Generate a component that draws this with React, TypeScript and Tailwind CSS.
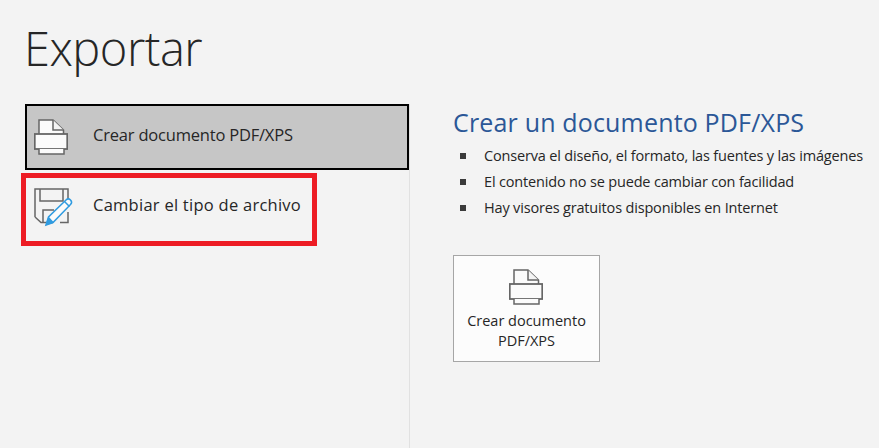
const font = { fontFamily: '"Open Sans", "Noto Sans", sans-serif' }

function PrinterIcon() {
  return (
    <svg viewBox="0 0 34 36" className="w-[34px] h-[36px] shrink-0" fill="none" stroke="#666666" strokeWidth="1.5">
      <path d="M5 15V1h14l10.500 10v4" fill="#fbfbfb" />
      <path d="M19 1v10h10.500" fill="#f4f4f4" />
      <rect x="0.75" y="15" width="32.5" height="15" fill="#fbfbfb" strokeWidth="1.8" />
      <path d="M5 30v5h25v-5" fill="#fbfbfb" />
    </svg>
  )
}

function ChangeTypeIcon() {
  return (
    <svg viewBox="0 0 39 40" className="w-[39px] h-[40px] shrink-0" fill="none">
      <path d="M1 29V1h33v15M1 29l6 5.500h12M34 24v10.500h-8" stroke="#666666" strokeWidth="1.5" />
      <path d="M6 1v12h23V1M9 34V22h11" stroke="#666666" strokeWidth="1.5" />
      <path d="M12 37l2.500-8L32 12c1.500-1.500 3-1.500 4.500 0s1.500 3 0 4.500L19 34.500z" fill="#fbfbfb" stroke="#2f9be0" strokeWidth="1.5" />
      <path d="M11.500 37.500l3-9 5.500 6z" fill="#2f9be0" />
      <path d="M30.500 13.500l5 5" stroke="#2f9be0" strokeWidth="1.5" />
    </svg>
  )
}

const bullets = [
  'Conserva el diseño, el formato, las fuentes y las imágenes',
  'El contenido no se puede cambiar con facilidad',
  'Hay visores gratuitos disponibles en Internet',
]

export default function App() {
  return (
    <div style={font} className="w-[879px] h-[448px] overflow-hidden bg-[#f3f3f3] text-[#262626]">
      <h1 className="pl-[24px] pt-[17px] h-[104px] text-[47px] leading-[62px] font-light tracking-[-0.5px]">Exportar</h1>
      <div className="flex h-[344px]">
        {/* Left column */}
        <div className="w-[410px] shrink-0 border-r border-[#e1e1e1] pl-[25px]">
          <div className="w-[384px] h-[66px] flex items-center bg-[#c6c6c6] border-2 border-black pl-[7px]">
            <PrinterIcon />
            <span className="ml-[25px] mb-[4px] text-[16.500px] tracking-[-0.2px]">Crear documento PDF/XPS</span>
          </div>
          <div className="relative w-[384px] h-[70px] mt-[3px] flex items-center pl-[9px]">
            <ChangeTypeIcon />
            <span className="ml-[20px] mb-[6px] text-[16.500px] tracking-[0.26px]">Cambiar el tipo de archivo</span>
            <div className="absolute left-[-4px] top-0 w-[296px] h-[73px] border-[5px] border-[#ed1c24]" />
          </div>
        </div>
        {/* Right column */}
        <div className="pl-[43px]">
          <h2 className="text-[25px] leading-[34px] mt-[1px] text-[#2b5797] tracking-[0.17px]">Crear un documento PDF/XPS</h2>
          <ul className="mt-[4px]">
            {bullets.map((b) => (
              <li key={b} className="flex items-center h-[26px] text-[14.500px] tracking-[-0.17px] whitespace-nowrap">
                <span className="w-[6px] h-[6px] ml-[7px] mr-[18px] bg-[#3a3a3a]" />
                {b}
              </li>
            ))}
          </ul>
          <div className="w-[147px] h-[107px] mt-[34px] bg-[#fcfcfc] border border-[#a6a6a6] flex flex-col items-center pt-[13px] pr-[2px]">
            <PrinterIcon />
            <div className="mt-[6px] text-center text-[14.500px] leading-[20px] tracking-[0px] whitespace-nowrap pl-[2px]">
              Crear documento<br />PDF/XPS
            </div>
          </div>
        </div>
      </div>
    </div>
  )
}
